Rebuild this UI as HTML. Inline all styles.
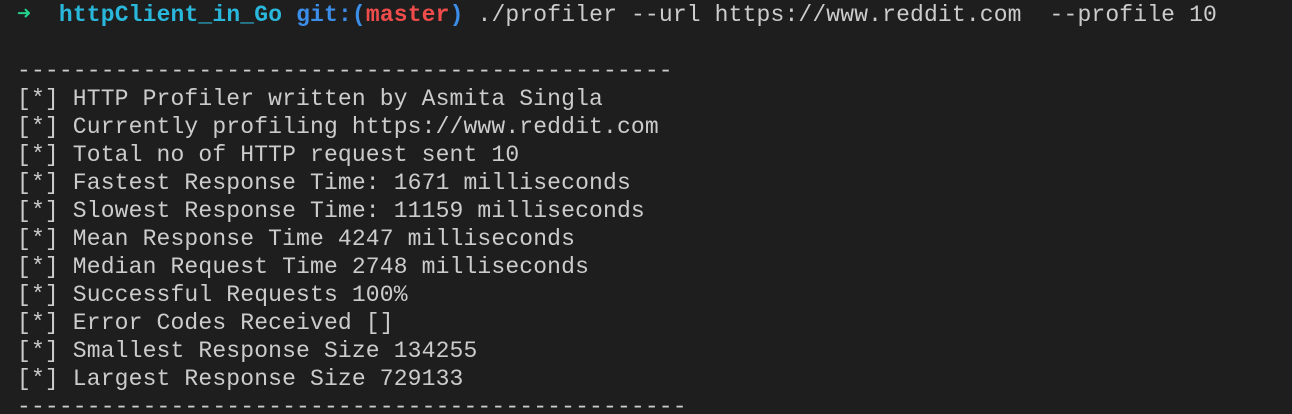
<!DOCTYPE html>
<html><head><meta charset="utf-8"><style>
html,body{margin:0;padding:0;background:#1e1e1e;width:1292px;height:414px;overflow:hidden}
pre{margin:0;padding:1px 0 0 17px;font-family:"Liberation Mono","DejaVu Sans Mono",monospace;font-size:23px;letter-spacing:0.15px;line-height:28px;color:#cccccc;white-space:pre}
.g{color:#23d18b;font-weight:bold}.c{color:#29b8db;font-weight:bold}.b{color:#3b8eea;font-weight:bold}.r{color:#f14c4c;font-weight:bold}
</style></head><body><pre><span class="g">➜</span>  <span class="c">httpClient_in_Go</span> <span class="b">git:(</span><span class="r">master</span><span class="b">)</span> ./profiler --url https://www.reddit.com  --profile 10

-----------------------------------------------
[*] HTTP Profiler written by Asmita Singla
[*] Currently profiling https://www.reddit.com
[*] Total no of HTTP request sent 10
[*] Fastest Response Time: 1671 milliseconds
[*] Slowest Response Time: 11159 milliseconds
[*] Mean Response Time 4247 milliseconds
[*] Median Request Time 2748 milliseconds
[*] Successful Requests 100%
[*] Error Codes Received []
[*] Smallest Response Size 134255
[*] Largest Response Size 729133
------------------------------------------------</pre></body></html>
